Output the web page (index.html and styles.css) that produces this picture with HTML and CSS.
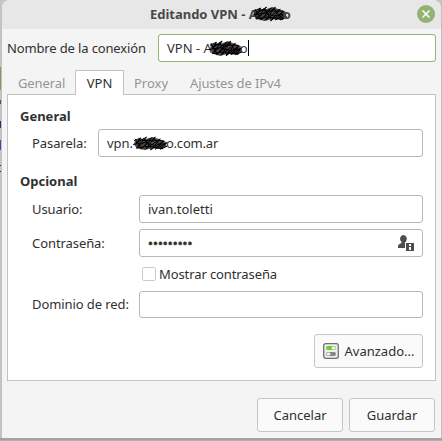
FILE: index.html
```html
<!DOCTYPE html>
<html lang="es">
<head>
<meta charset="utf-8">
<title>Editando VPN</title>
<link rel="stylesheet" href="styles.css">
</head>
<body>
<svg class="defs" width="0" height="0" aria-hidden="true">
  <symbol id="scribble" viewBox="0 0 36 16" preserveAspectRatio="none">
    <path d="M2 5 7 3 14 3 20 1 26 3 34 6 33 8 35 11 29 14 20 13 12 15 4 13 1 9Z" fill="#111" opacity=".75"/>
    <path d="M1 5 8 2 3 8 14 1 4 12 19 2 8 14 23 1 13 14 28 3 18 15 32 5 23 14 35 7 28 14 35 11M0 9 12 7 22 10 34 8M3 13 15 11 29 13M5 4 17 5 31 5M2 3 9 14M11 2 19 14M21 2 31 14" fill="none" stroke="#000" stroke-width="1"/>
  </symbol>
</svg>
<div class="window">
  <header class="titlebar">
    <h1 class="title"><span>Editando VPN - A</span><svg class="mark mark-title"><use href="#scribble"/></svg><span>o</span></h1>
    <svg class="close" viewBox="0 0 18 18"><circle cx="9" cy="9" r="9" fill="#92b372"/><path d="M5.500 5.500l7 7M12.500 5.500l-7 7" stroke="#fff" stroke-width="1.500"/></svg>
  </header>
  <div class="name-row">
    <span class="name-label">Nombre de la conexión</span>
    <div class="entry focused"><span class="name-text">VPN - A</span><svg class="mark mark-name"><use href="#scribble"/></svg><span>o</span><i class="caret"></i></div>
  </div>
  <nav class="tabs">
    <span class="tab t-general">General</span>
    <span class="tab active">VPN</span>
    <span class="tab t-proxy">Proxy</span>
    <span class="tab t-ipv4">Ajustes de IPv4</span>
  </nav>
  <main class="panel">
    <h2 class="h-general">General</h2>
    <div class="row gateway">
      <span class="label l-pas">Pasarela:</span>
      <div class="entry"><span class="vpn">vpn.</span><svg class="mark mark-gateway"><use href="#scribble"/></svg><span class="domain">o.com.ar</span></div>
    </div>
    <h2 class="h-optional">Opcional</h2>
    <div class="row user"><span class="label l-usu">Usuario:</span><div class="entry"><span class="usertext">ivan.toletti</span></div></div>
    <div class="row password"><span class="label l-con">Contraseña:</span>
      <div class="entry"><span class="dots">•••••••••</span>
        <svg class="user-icon" viewBox="0 0 16 16"><path fill="#4d4d4d" d="M5 0a4 4 0 0 1 3 6.500V8h2v5H0v-2q0-1.500 2-2.200L3.500 8V7A4 4 0 0 1 5 0z"/><path fill="#fff" d="M7 7H16V16H7z"/><path fill="#4d4d4d" d="M8 8h8v8H8z"/><path fill="#fff" d="M11 9h2v2h-2zM11 12h2v3h-2z"/></svg>
      </div>
    </div>
    <div class="check-row"><i class="checkbox"></i><span class="l-mos">Mostrar contraseña</span></div>
    <div class="row network"><span class="label l-dom">Dominio de red:</span><div class="entry"></div></div>
    <div class="advanced-row">
      <div class="button advanced">
        <svg class="switches" viewBox="0 0 16 16"><rect x=".7" y=".7" width="14.600" height="14.600" rx="2" fill="#ededed" stroke="#707070" stroke-width="1.300"/><rect x="3" y="3" width="10" height="4" rx="2" fill="#73c82c"/><rect x="8.500" y="3.500" width="4" height="3" rx="1.500" fill="#f4f4f4"/><rect x="3" y="9" width="10" height="4" rx="2" fill="#858585"/><rect x="3.500" y="9.500" width="4" height="3" rx="1.500" fill="#f4f4f4"/></svg>
        <span class="l-ava">Avanzado...</span>
      </div>
    </div>
  </main>
  <footer class="actions"><div class="button"><span class="l-can">Cancelar</span></div><div class="button"><span class="l-gua">Guardar</span></div></footer>
</div>
</body>
</html>
```
FILE: styles.css
```css
* { box-sizing: border-box; }
body { margin: 0; width: 442px; height: 441px; overflow: hidden; background: linear-gradient(#7f9d61, #7f9d61) 0 67px / 1px 23px no-repeat, linear-gradient(#456 0 0) 0 100px / 1px 4px no-repeat, linear-gradient(#26366b 0 0) 0 121px / 1px 7px no-repeat, linear-gradient(#35589a 0 0) 0 140px / 1px 10px no-repeat, linear-gradient(#333 0 0) 0 165px / 1px 1px no-repeat, linear-gradient(#333 0 0) 0 171px / 1px 1px no-repeat, linear-gradient(#c5c5c5 0 437px, #999 439px, #b8b8b8); font: 13px/18px "Noto Sans", sans-serif; color: #303030; padding: 0 1px 3px 2px; }
.defs { position: absolute; }
span { white-space: nowrap; }
.window { height: 438px; background: #f4f4f4; border-radius: 8px 8px 0 0; overflow: hidden; box-shadow: 1px 0 #c0c0c0, -1px 0 #c0c0c0; }
.titlebar { height: 29px; background: #e7e7e7; display: flex; align-items: center; padding: 0 6px 1px 148px; }
.title { margin: 0; font-size: 13px; line-height: 18px; font-weight: 700; color: #484848; display: flex; align-items: center; letter-spacing: -.02px; }
.close { width: 18px; height: 18px; margin-left: auto; }
.mark { flex: none; }
.mark-title { width: 35px; height: 16px; margin: 0 -5px; }
.mark-name { width: 34px; height: 17px; margin: 0 -3px; }
.mark-gateway { width: 35px; height: 15px; margin-right: -2px; }
.name-row { display: flex; align-items: center; margin-top: 5px; padding: 0 5px; height: 28px; }
.name-label { width: 151px; flex: none; letter-spacing: -.14px; }
.entry { height: 28px; flex: 1; border: 1px solid #b8b8b8; border-radius: 3px; background: #fff; padding: 0 8px; display: flex; align-items: center; }
.focused { border-color: #92b372; }
.caret { width: 1px; height: 16px; background: #000; }
.tabs { display: flex; height: 25px; margin: 8px 6px 0 16px; color: #959595; position: relative; z-index: 1; }
.tab { height: 25px; line-height: 26px; }
.t-general { width: 57px; letter-spacing: -.1px; }
.tab.active { width: 49px; border: 1px solid #c3c3c3; border-bottom: 0; background: #fff; color: #303030; text-align: center; line-height: 25px; }
.t-proxy { width: 56px; padding-left: 10px; }
.t-ipv4 { padding-left: 10px; letter-spacing: -.12px; }
.panel { margin: -1px 5px 0; height: 287px; border: 1px solid #c3c3c3; background: #fff; padding: 11px 12px 0; }
h2 { margin: 0; font-size: 13px; line-height: 20px; height: 20px; }
.row { display: flex; align-items: center; padding-left: 12px; }
.label { width: 107px; flex: none; letter-spacing: -.08px; }
.gateway { margin: 3px 0 14px; }
.gateway .label { width: 66px; }
.vpn { letter-spacing: -.05px; }
.domain { letter-spacing: -.2px; }
.dots { letter-spacing: .05px; -webkit-text-stroke: .6px; }
.password, .user { margin-bottom: 6px; }
.user { margin-top: 4px; }
.user-icon { width: 16px; height: 16px; margin-left: auto; }
.check-row { display: flex; align-items: center; height: 18px; margin: 8px 0 8px 122px; gap: 3px; }
.l-mos { letter-spacing: -.1px; }
.checkbox { width: 14px; height: 14px; border: 1px solid #ccc; border-radius: 2px; }
.network .entry { height: 27px; }
.network .label { margin-top: -1px; }
.advanced-row { display: flex; justify-content: flex-end; margin-top: 16px; }
.button { height: 34px; width: 86px; border: 1px solid #c6c6c6; border-radius: 3px; background: #fafafa; display: flex; justify-content: center; align-items: center; }
.advanced { width: 109px; gap: 6px; }
.switches { width: 16px; height: 16px; }
.actions { display: flex; justify-content: flex-end; gap: 6px; margin: 17px 6px 0; }
```
